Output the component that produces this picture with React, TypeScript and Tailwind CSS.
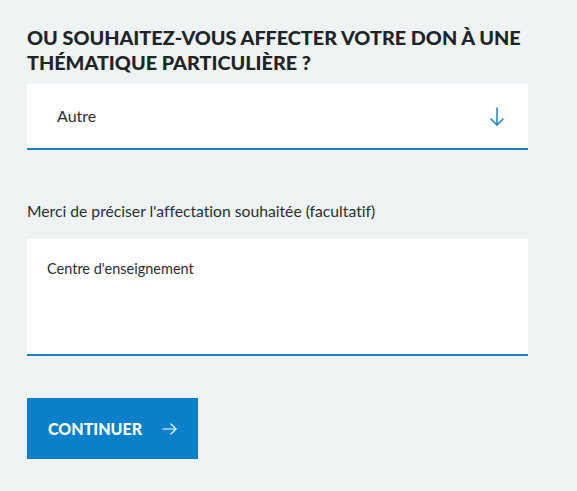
export default function App() {
  return (
    <div className="min-h-screen bg-[#eff3f4] pt-[25px] pl-[27px] font-['Lato',sans-serif] text-[#202427] [font-variant-ligatures:none]">
      <div className="w-[501px]">
        <h2 className="text-[19.8px] leading-[25px] font-black uppercase">
          Ou souhaitez-vous affecter votre don à une thématique particulière ?
        </h2>

        <div className="mt-[9px] flex h-[66px] items-center justify-between border-b-2 border-[#1a82c4] bg-white pl-[30px] pr-[24px]">
          <span className="text-[16px] text-[#2a2e31]">Autre</span>
          <svg width="14" height="19" viewBox="0 0 14 19" fill="none" stroke="#1a82c4" strokeWidth="1.5" strokeLinecap="round" strokeLinejoin="round">
            <path d="M7 1v17" />
            <path d="M1 12l6 6 6-6" />
          </svg>
        </div>

        <label className="mt-[49px] block text-[15.7px] leading-[24px] text-[#2a2e31]">
          Merci de préciser l'affectation souhaitée (facultatif)
        </label>

        <div className="mt-[16px] h-[117px] border-b-2 border-[#1a82c4] bg-white px-[20px] pt-[19px]">
          <p className="text-[14.5px] leading-[22px] text-[#2a2e31]">Centre d'enseignement</p>
        </div>

        <button className="mt-[42px] flex h-[61px] w-[171px] items-center gap-[20px] bg-[#0a80c9] pl-[21px] text-white">
          <span className="text-[16px] font-black uppercase">Continuer</span>
          <svg width="15" height="12" viewBox="0 0 15 12" fill="none" stroke="white" strokeWidth="1.2" strokeLinecap="round" strokeLinejoin="round">
            <path d="M1 6h13" />
            <path d="M9 1l5 5-5 5" />
          </svg>
        </button>
      </div>
    </div>
  );
}
